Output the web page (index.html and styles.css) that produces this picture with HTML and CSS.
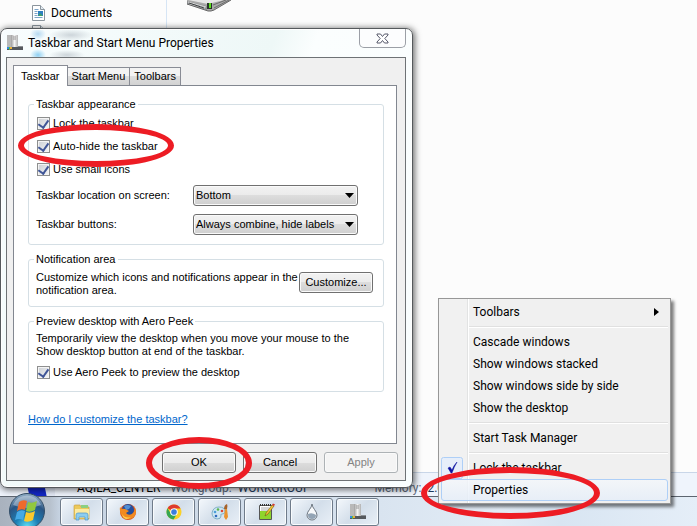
FILE: index.html
```
<!DOCTYPE html>
<html lang="en">
<head>
    <meta charset="UTF-8">
    <meta name="viewport" content="width=device-width, initial-scale=1.0">
    <title>Taskbar and Start Menu Properties</title>
    <link rel="stylesheet" href="styles.css">
</head>
<body>
    <svg class="defs" aria-hidden="true">
        <defs>
            <linearGradient id="metal" x1="0" x2="1" y1="0" y2="0">
                <stop offset="0" stop-color="#9d9d9d"/>
                <stop offset="0.5" stop-color="#f4f4f4"/>
                <stop offset="1" stop-color="#b0b0b0"/>
            </linearGradient>
            <radialGradient id="orb" cx="0.5" cy="0.95" r="0.95">
                <stop offset="0" stop-color="#5fe0f5"/>
                <stop offset="0.35" stop-color="#1d7fb5"/>
                <stop offset="0.7" stop-color="#2a5584"/>
                <stop offset="1" stop-color="#9db9d0"/>
            </radialGradient>
            <symbol id="taskbar-icon" viewBox="0 0 16 16">
                <rect x="0" y="0" width="5" height="12" fill="#b9b9b9"/>
                <rect x="4" y="0" width="7" height="12" fill="url(#metal)"/>
                <path d="M6 2h3M6 4h3" stroke="#777" stroke-width="0.7"/>
                <path d="M0 12h16v3H0z" fill="#54585d"/>
                <path d="M11 11h5v1h-5z" fill="#8b8f94"/>
                <rect x="0" y="12" width="2" height="2" fill="#2f8fe0"/>
                <rect x="2" y="12" width="1" height="3" fill="#5cb946"/>
                <rect x="3" y="12" width="2" height="2" fill="#e8b23a"/>
            </symbol>
            <symbol id="doc-icon" viewBox="0 0 13 16">
                <path d="M0.5 0.5h8l4 4v11h-12z" fill="#fff" stroke="#8b949c"/>
                <path d="M8.5 0.5v4h4" fill="#e3ebf2" stroke="#8b949c"/>
                <path d="M2.5 4.5h4M2.5 6.5h3M2.5 8.5h3M2.5 10.5h3M2.5 12.5h8" stroke="#7da4c7"/>
                <rect x="6" y="6" width="5" height="5" fill="#2f7fc1"/>
                <path d="M6 11l2-3 3 3z" fill="#3fa06a"/>
            </symbol>
        </defs>
    </svg>

    <main class="explorer">
        <nav class="sidebar">
            <a class="place" href="#documents"><svg width="13" height="16"><use href="#doc-icon"/></svg>Documents</a>
            <span class="place"><svg width="13" height="16"><use href="#doc-icon"/></svg></span>
        </nav>
        <div class="files">
            <svg class="drive" width="46" height="12" viewBox="0 0 46 12">
                <path d="M1 0H45L28 10 25 11H22L1 4z" fill="#a9a9a9"/>
                <path d="M2 0H38L22 4z" fill="#e6e6e6"/>
                <path d="M1 1l20 5v4L1 4z" fill="#8e9092"/>
                <path d="M2 2l18 5M3 4l16 4" stroke="#d9d9d9"/>
                <path d="M3 3l15 5" stroke="#3f4244"/>
                <path d="M27 5L40 0M28 8L43 0" stroke="#6d6d6d"/>
                <path d="M1 4l21 7h3l3-1L45 0" fill="none" stroke="#666"/>
                <rect x="21" y="3" width="5" height="6" fill="#29332a"/>
                <rect x="23" y="3" width="2" height="5" fill="#5be01d"/>
            </svg>
        </div>
    </main>

    <footer class="details">
        <svg class="computer" width="40" height="23" viewBox="0 0 40 23">
            <path d="M9 5L32 3 35 23H13z" fill="#1226c4"/>
            <path d="M26 3l11 2v18H30z" fill="#e3e9f5"/>
            <path d="M0 19l7-4 5 4z" fill="#555d69"/>
        </svg>
        <span class="name">AQILA_CENTER</span>
        <span class="key">Workgroup:</span>
        <span>WORKGROUP</span>
        <span class="key memory">Memory:</span>
        <span>2.0</span>
    </footer>

    <div class="taskbar">
        <button class="start" aria-label="Start">
            <svg width="38" height="38" viewBox="0 0 38 38">
                <circle cx="19" cy="19" r="17.5" fill="url(#orb)" stroke="#344f69"/>
                <path d="M5 13a15 15 0 0 1 28 0q-14 6-28 0z" fill="#fff" opacity="0.35"/>
                <path d="M11 10q4-3 8-1l-2 9q-4-2-8 1z" fill="#ef6a2c"/>
                <path d="M20 10q4 2 9-1l-2 9q-5 3-9 1z" fill="#92c83e"/>
                <path d="M9 20q4-3 8-1l-2 9q-4-2-8 0z" fill="#45a9e6"/>
                <path d="M18 20q4 2 9-1l-2 9q-5 3-9 1z" fill="#fcc92d"/>
            </svg>
        </button>
        <button class="task" aria-label="Windows Explorer">
            <svg width="18" height="18" viewBox="0 0 18 18">
                <path d="M1 3q0-1 1-1h5l1 2h8v12H1z" fill="#ecc95d" stroke="#c79c35" stroke-width="0.6"/>
                <path d="M2 6h14v9H2z" fill="#fbeaa0"/>
                <path d="M8 2h7v3H8z" fill="#8dcf80"/>
                <path d="M3 17v-5q0-2 2-2h8q2 0 2 2v5h-3v-3H6v3z" fill="#8ccdf0" stroke="#4d96c9" stroke-width="0.7"/>
            </svg>
        </button>
        <button class="task" aria-label="Firefox">
            <svg width="18" height="18" viewBox="0 0 18 18">
                <circle cx="9" cy="9" r="8" fill="#d5501d"/>
                <circle cx="9" cy="7" r="6" fill="#264e9b"/>
                <path d="M5 3q3-2 7 0l-2 3-3 1z" fill="#528fd4"/>
                <path d="M1 4l2 2q2-1 5 1l2 1-3 2q2 3 6 1 4-3 2-8 4 6 0 11-5 4-10 1-5-4-4-11z" fill="#f28a20"/>
                <path d="M3 11q3 5 9 3-5 4-8 0z" fill="#ffd04a"/>
            </svg>
        </button>
        <button class="task" aria-label="Chrome">
            <svg width="16" height="16" viewBox="0 0 16 16">
                <circle cx="8" cy="8" r="7.5" fill="#fbd128"/>
                <path d="M8 8L1.5 4.2A7.5 7.5 0 0 1 14.5 4.5H8z" fill="#de3a2e"/>
                <path d="M1.5 4.2A7.5 7.5 0 0 0 7.5 15.5L11 9.7 8 8 5 9.7z" fill="#35a653"/>
                <circle cx="8" cy="8" r="3.8" fill="#fff"/>
                <circle cx="8" cy="8" r="2.8" fill="#3b7ddd"/>
            </svg>
        </button>
        <button class="task" aria-label="Paint">
            <svg width="18" height="18" viewBox="0 0 18 18">
                <path d="M8 4q6 0 6 5 0 2-3 2-2 0-1 2 0 3-4 3-5-1-5-6 1-6 7-6z" fill="#cfe6f2" stroke="#6aa3bd" stroke-width="0.8"/>
                <circle cx="4" cy="9" r="1.3" fill="#4d9fd8"/>
                <circle cx="7" cy="6.5" r="1.3" fill="#5bb44d"/>
                <circle cx="11" cy="8" r="1.3" fill="#dd4534"/>
                <circle cx="5" cy="13" r="1.3" fill="#3168be"/>
                <path d="M14 6h2l1 8-2 3-2-3z" fill="#e9932e"/>
                <path d="M13 6q0-4 3-5 1 2 0 5z" fill="#a5622a"/>
            </svg>
        </button>
        <button class="task" aria-label="Notepad++">
            <svg width="18" height="18" viewBox="0 0 18 18">
                <path d="M2.5 2.5h12v14h-12z" fill="#fff" stroke="#555"/>
                <path d="M3 8h11v8H3z" fill="#8ed42c"/>
                <path d="M4 5h8M4 7h7" stroke="#aaa"/>
                <path d="M3 2h11" stroke="#333" stroke-width="2" stroke-dasharray="1 1"/>
                <path d="M8 13l1-3 6-8 2 1-6 8z" fill="#f3c431" stroke="#6d5317" stroke-width="0.6"/>
                <path d="M15 2l1-1.5 2 1-1 1.5z" fill="#d5372d"/>
            </svg>
        </button>
        <button class="task" aria-label="Droplet">
            <svg width="14" height="18" viewBox="0 0 14 18">
                <path d="M7 1C7 5 2 8 2 12a5 5 0 0 0 10 0C12 8 7 5 7 1z" fill="#f7f9fb" stroke="#6c7681"/>
                <path d="M3 11q4-2 8 1a4 4 0 0 1-8 0z" fill="#93a4b5"/>
            </svg>
        </button>
        <button class="task" aria-label="Taskbar properties">
            <svg width="16" height="16"><use href="#taskbar-icon"/></svg>
        </button>
    </div>

    <section class="dialog" role="dialog" aria-labelledby="dialog-title">
        <header class="titlebar">
            <svg width="16" height="16"><use href="#taskbar-icon"/></svg>
            <h1 id="dialog-title">Taskbar and Start Menu Properties</h1>
            <button class="close" aria-label="Close">
                <svg width="13" height="11" viewBox="0 0 13 11">
                    <path d="M1 1h3.500l2 2.500 2-2.500H12v1L8.800 5.500 12 9v1H8.500l-2-2.500-2 2.500H1V9l3.200-3.500L1 2z" fill="#fff" stroke="#56596b"/>
                </svg>
            </button>
        </header>
        <div class="client">
            <div class="tabs" role="tablist">
                <button class="tab active" role="tab" aria-selected="true">Taskbar</button>
                <button class="tab" role="tab">Start Menu</button>
                <button class="tab" role="tab">Toolbars</button>
            </div>
            <div class="panel">
                <fieldset>
                    <legend>Taskbar appearance</legend>
                    <label class="check"><input type="checkbox" checked>Lock the taskbar</label>
                    <label class="check"><input type="checkbox" checked>Auto-hide the taskbar</label>
                    <label class="check"><input type="checkbox" checked>Use small icons</label>
                    <div class="row">
                        <label for="location">Taskbar location on screen:</label>
                        <span class="select">
                            <select id="location"><option>Bottom</option></select>
                            <svg width="9" height="5" viewBox="0 0 9 5"><path d="M0 0h9L4.500 5z"/></svg>
                        </span>
                    </div>
                    <div class="row">
                        <label for="buttons">Taskbar buttons:</label>
                        <span class="select">
                            <select id="buttons"><option>Always combine, hide labels</option></select>
                            <svg width="9" height="5" viewBox="0 0 9 5"><path d="M0 0h9L4.500 5z"/></svg>
                        </span>
                    </div>
                </fieldset>
                <fieldset class="notify">
                    <legend>Notification area</legend>
                    <div class="split">
                        <p>Customize which icons and notifications appear in the<br>notification area.</p>
                        <button class="btn">Customize...</button>
                    </div>
                </fieldset>
                <fieldset class="peek">
                    <legend>Preview desktop with Aero Peek</legend>
                    <p>Temporarily view the desktop when you move your mouse to the<br>Show desktop button at end of the taskbar.</p>
                    <label class="check"><input type="checkbox" checked>Use Aero Peek to preview the desktop</label>
                </fieldset>
                <a class="help" href="#help">How do I customize the taskbar?</a>
            </div>
            <div class="actions">
                <button class="btn">OK</button>
                <button class="btn">Cancel</button>
                <button class="btn" disabled>Apply</button>
            </div>
        </div>
        <span class="ring ring-autohide"></span>
        <span class="ring ring-ok"></span>
    </section>

    <div class="menu" role="menu">
        <button role="menuitem">Toolbars
            <svg class="arrow" width="5" height="8" viewBox="0 0 5 8"><path d="M0 0l5 4-5 4z"/></svg>
        </button>
        <hr>
        <button role="menuitem">Cascade windows</button>
        <button role="menuitem">Show windows stacked</button>
        <button role="menuitem">Show windows side by side</button>
        <button role="menuitem">Show the desktop</button>
        <hr>
        <button role="menuitem">Start Task Manager</button>
        <hr>
        <button role="menuitemcheckbox" aria-checked="true" class="checked">
            <svg class="tick" width="22" height="22" viewBox="0 0 22 22">
                <rect x="0.500" y="0.500" width="21" height="21" rx="2" fill="#e6eefa" stroke="#aecff7"/>
                <path d="M7 11l2-1 2 3q2-5 5-8-3 5-5 11h-1z" fill="#0c12a1" stroke="#0c12a1" stroke-width="0.500"/>
            </svg>
            Lock the taskbar
        </button>
        <button role="menuitem" class="hover">Properties</button>
        <span class="ring ring-properties"></span>
    </div>
</body>
</html>
```

FILE: styles.css
```
* {
    box-sizing: border-box;
}
body {
    margin: 0;
    min-height: 100vh;
    display: flex;
    flex-direction: column;
    position: relative;
    overflow: hidden;
    background: #fcfcfc;
    color: #000;
    font: 12px/16px Roboto, "Noto Sans", sans-serif;
}
button, select, input {
    font: inherit;
    color: inherit;
    margin: 0;
}
svg {
    display: block;
    flex: none;
}
.defs {
    position: absolute;
    width: 0;
    height: 0;
}

/* Explorer window in the background */
.explorer {
    flex: 1;
    display: flex;
}
.sidebar {
    width: 167px;
    padding: 5px 0 0 32px;
    border-right: 1px solid #d6e5f5;
}
.place {
    display: flex;
    align-items: center;
    gap: 6px;
    height: 16px;
    margin-bottom: 4px;
    color: #000;
    text-decoration: none;
}
.files {
    padding-left: 19px;
}
.details {
    display: flex;
    gap: 6px;
    height: 24px;
    padding: 7px 0 0 18px;
    border-top: 1px solid #c9d6e8;
    background: #eff4fc;
    color: #1e395b;
    white-space: nowrap;
}
.computer {
    margin-right: 13px;
}
.name {
    color: #000;
    margin-right: 4px;
}
.key {
    color: #5a6779;
}
.memory {
    margin-left: 58px;
}

/* Taskbar */
.taskbar {
    display: flex;
    gap: 3px;
    height: 30px;
    padding: 1px 0 0 8px;
    border-top: 1px solid #5d6570;
    background: linear-gradient(90deg, #a9b2be 0, #b7c1cd 50px, #c6d3e2 60px, #d9e4f0 380px, #e2ecf6 500px, #d8e5f2 560px, #e5eef8 100%);
}
.start {
    width: 38px;
    height: 38px;
    margin: -6px 11px 0 0;
    padding: 0;
    border: 0;
    background: none;
}
.task {
    display: flex;
    align-items: center;
    justify-content: center;
    width: 43px;
    height: 28px;
    padding: 0;
    border: 1px solid #6f7b8a;
    border-radius: 3px;
    background: linear-gradient(135deg, #f4f8fc, #d3deea 50%, #e9f0f7);
    box-shadow: inset 0 0 0 1px #f8fbfd;
}

/* Properties dialog */
.dialog {
    position: absolute;
    top: 28px;
    left: 0;
    right: 284px;
    padding: 0 6px 6px 5px;
    border: 1px solid #55595c;
    border-radius: 7px;
    background:
        radial-gradient(22px 6px at 70px 6px, #cdd5da, transparent),
        radial-gradient(18px 5px at 66px 26px, #cdd5da, transparent),
        radial-gradient(8px 6px at 37px 5px, #b5d9f0, transparent),
        radial-gradient(8px 6px at 37px 26px, #8fd0f2, transparent),
        linear-gradient(110deg, #f8fdfe 0, #eef8f7 260px, #fbfefe 300px, #f8fdfe);
    box-shadow: 1px 1px 6px 1px rgba(0, 0, 0, 0.55), inset 0 0 0 1px #fff;
    font: 11px/13px "Liberation Sans", Arial, sans-serif;
}
.titlebar {
    display: flex;
    align-items: center;
    gap: 5px;
    height: 28px;
    padding-left: 1px;
}
.titlebar h1 {
    flex: 1;
    margin: 0;
    font: 12px/16px Roboto, "Noto Sans", sans-serif;
    white-space: nowrap;
}
.close {
    display: flex;
    align-items: center;
    justify-content: center;
    align-self: flex-start;
    width: 47px;
    height: 19px;
    padding: 0;
    border: 1px solid #9b9fa6;
    border-top: 0;
    border-radius: 0 0 5px 5px;
    background: #fcfdfe;
}
.client {
    padding: 7px;
    padding-left: 6px;
    border: 1px solid #6e7275;
    background: #f0f0f0;
}
.tabs {
    display: flex;
    align-items: flex-end;
    height: 20px;
}
.tab {
    height: 18px;
    padding: 0 4px;
    border: 1px solid #898c95;
    border-bottom: 0;
    border-left: 0;
    background: linear-gradient(#f3f3f3 50%, #dddddd 50%, #d2d2d2);
    white-space: nowrap;
}
.tab.active {
    height: 21px;
    margin-bottom: -1px;
    padding: 0 7px;
    border-left: 1px solid #898c95;
    background: #fff;
    position: relative;
}
.panel {
    padding: 12px 12px 17px 14px;
    border: 1px solid #828790;
    background: #fff;
    margin-right: 1px;
}
fieldset {
    min-width: 0;
    margin: 0 0 8px;
    padding: 1px 8px 5px 7px;
    border: 1px solid #d5dfe5;
    border-radius: 3px;
}
legend {
    padding: 0 2px;
    margin-left: -2px;
}
p {
    margin: 0;
    white-space: nowrap;
}
.check {
    display: flex;
    align-items: center;
    gap: 3px;
    height: 23px;
    padding-left: 1px;
}
input[type="checkbox"] {
    appearance: none;
    display: grid;
    width: 13px;
    height: 13px;
    border: 1px solid #8e8f8f;
    background: linear-gradient(135deg, #cbcfd5, #f6f6f6);
    box-shadow: inset 0 0 0 1px #f4f4f4;
}
input[type="checkbox"]::before {
    content: "";
    place-self: center;
    width: 5px;
    height: 8px;
    margin-bottom: 2px;
    border: solid #3f5597;
    border-width: 0 2px 2px 0;
    transform: rotate(35deg);
}
.row {
    display: grid;
    grid-template-columns: 157px 165px;
    align-items: center;
    height: 29px;
}
.select {
    position: relative;
}
.select svg {
    position: absolute;
    right: 4px;
    top: 8px;
    pointer-events: none;
}
select {
    appearance: none;
    display: block;
    width: 100%;
    height: 21px;
    padding: 0 2px;
}
select, .btn {
    border: 1px solid #707070;
    border-radius: 3px;
    background: linear-gradient(#f2f2f2, #ebebeb 50%, #dddddd 50%, #cfcfcf);
    box-shadow: inset 0 0 0 1px #fafafa;
}
.btn {
    width: 74px;
    height: 21px;
    padding: 0;
    flex: none;
}
.btn:disabled {
    border-color: #adb2b5;
    background: #f4f4f4;
    color: #838383;
}
.notify {
    padding: 5px 10px 9px 7px;
}
.split {
    display: flex;
    align-items: flex-end;
    justify-content: space-between;
    height: 26px;
}
.split p {
    min-width: 0;
}
.split .btn {
    margin-bottom: 4px;
}
.peek {
    padding: 4px 8px 7px 7px;
}
.peek .check {
    margin-top: 3px;
}
.help {
    display: inline-block;
    margin-top: 13px;
    color: #0066cc;
}
.actions {
    display: flex;
    justify-content: flex-end;
    gap: 7px;
    padding-top: 8px;
}

/* Taskbar context menu */
.menu {
    position: absolute;
    right: 26px;
    bottom: 22px;
    width: 233px;
    padding: 2px;
    border: 1px solid #979797;
    background: linear-gradient(90deg, #f1f1f1 28px, #e2e3e3 28px, #e2e3e3 29px, #fff 29px, #fff 30px, #f0f0f0 30px);
    box-shadow: 3px 3px 3px rgba(0, 0, 0, 0.5);
}
.menu button {
    display: flex;
    align-items: center;
    width: 100%;
    height: 22px;
    padding: 0 9px 0 32px;
    border: 0;
    background: none;
    text-align: left;
    white-space: nowrap;
}
.menu .checked {
    padding-left: 0;
    gap: 10px;
}
.menu .hover {
    padding-left: 31px;
    border: 1px solid #aecff7;
    border-radius: 3px;
    background: linear-gradient(rgba(244, 247, 251, 0.8), rgba(229, 238, 249, 0.8));
}
.menu .arrow {
    margin-left: auto;
}
.menu hr {
    height: 2px;
    margin: 3px 0 3px 28px;
    border: 0;
    border-top: 1px solid #e0e0e0;
    border-bottom: 1px solid #fff;
}

/* Red markers */
.ring {
    position: absolute;
    border: 6px solid #ed1c24;
    border-radius: 50%;
    pointer-events: none;
}
.ring-autohide {
    top: 95px;
    left: 17px;
    width: 156px;
    height: 43px;
}
.ring-ok {
    top: 408px;
    left: 145px;
    width: 106px;
    height: 52px;
}
.ring-properties {
    top: 168px;
    left: -18px;
    width: 179px;
    height: 52px;
}
```
